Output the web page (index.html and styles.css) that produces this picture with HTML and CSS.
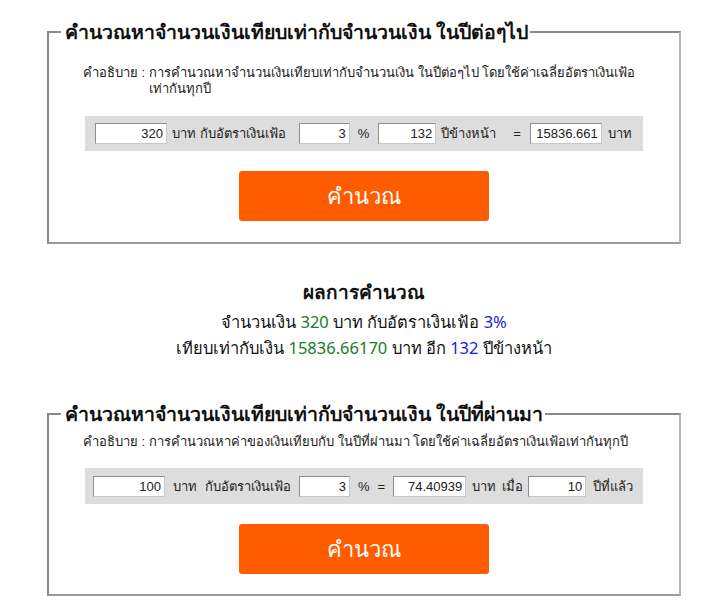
FILE: index.html
```html
<!DOCTYPE html>
<html lang="th">
<head>
<meta charset="utf-8">
<link rel="stylesheet" href="styles.css">
</head>
<body>
<div class="page">
  <fieldset class="box box-first">
    <legend class="legend">คำนวณหาจำนวนเงินเทียบเท่ากับจำนวนเงิน ในปีต่อๆไป</legend>
    <div class="desc">
      <span class="desc-label">คำอธิบาย :</span>
      <span class="desc-text">การคำนวณหาจำนวนเงินเทียบเท่ากับจำนวนเงิน ในปีต่อๆไป โดยใช้ค่าเฉลี่ยอัตราเงินเฟ้อ เท่ากันทุกปี</span>
    </div>
    <div class="bar bar1">
      <input class="in w72" type="text" value="320">
      <span class="m5">บาท กับอัตราเงินเฟ้อ</span>
      <input class="in w50 m13" type="text" value="3">
      <span class="m8">%</span>
      <input class="in w58 m9" type="text" value="132">
      <span class="m5">ปีข้างหน้า</span>
      <span class="m17">=</span>
      <input class="in w72 m9" type="text" value="15836.661">
      <span class="m6">บาท</span>
    </div>
    <div class="btn-row"><button class="btn">คำนวณ</button></div>
  </fieldset>

  <section class="result">
    <h2 class="result-title">ผลการคำนวณ</h2>
    <p class="result-line first-line">จำนวนเงิน <span class="g">320</span> บาท กับอัตราเงินเฟ้อ <span class="b">3%</span></p>
    <p class="result-line">เทียบเท่ากับเงิน <span class="g">15836.66170</span> บาท อีก <span class="b">132</span> ปีข้างหน้า</p>
  </section>

  <fieldset class="box box-second">
    <legend class="legend">คำนวณหาจำนวนเงินเทียบเท่ากับจำนวนเงิน ในปีที่ผ่านมา</legend>
    <div class="desc desc2">
      <span class="desc-label">คำอธิบาย :</span>
      <span class="desc-text">การคำนวณหาค่าของเงินเทียบกับ ในปีที่ผ่านมา โดยใช้ค่าเฉลี่ยอัตราเงินเฟ้อเท่ากันทุกปี</span>
    </div>
    <div class="bar bar2">
      <input class="in w72" type="text" value="100">
      <span class="m8">บาท</span>
      <span class="m8">กับอัตราเงินเฟ้อ</span>
      <input class="in w50 m8" type="text" value="3">
      <span class="m8">%</span>
      <span class="m8">=</span>
      <input class="in w74 m8" type="text" value="74.40939">
      <span class="m6">บาท</span>
      <span class="m6">เมื่อ</span>
      <input class="in w58 m5" type="text" value="10">
      <span class="m7">ปีที่แล้ว</span>
    </div>
    <div class="btn-row"><button class="btn">คำนวณ</button></div>
  </fieldset>
</div>
</body>
</html>
```
FILE: styles.css
```css
html, body {
  margin: 0;
  padding: 0;
  background: #ffffff;
}
body {
  font-family: "Liberation Sans", Tahoma, sans-serif;
  color: #222;
}
.page {
  width: 634px;
  margin-left: 47px;
  padding-top: 20px;
}
.box {
  margin: 0;
  border: 2px solid #999;
  border-color: #8a8a8a #b5b5b5 #9a9a9a #8a8a8a;
  padding: 0 0 21px 0;
}
.box-second {
  padding-bottom: 20px;
}
.legend {
  margin-left: 12px;
  padding: 0 2px 0 4px;
  font-family: "Noto Sans", "Liberation Sans", sans-serif;
  font-size: 19.5px;
  font-weight: 600;
  color: #111;
  line-height: 24px;
}
.desc {
  display: flex;
  margin: 21px 28px 0 34px;
  font-size: 13px;
  line-height: 16px;
  color: #222;
}
.desc2 {
  margin-top: 8px;
}
.desc-label {
  white-space: nowrap;
  margin-right: 4px;
}
.bar {
  display: flex;
  align-items: center;
  margin: 19px 36px 0 36px;
  height: 35px;
  background: #dddddd;
  font-size: 13px;
  white-space: nowrap;
}
.bar1 {
  padding-left: 10px;
}
.bar2 {
  margin-top: 18px;
  height: 36px;
  padding-left: 8px;
}
.in {
  box-sizing: border-box;
  height: 21px;
  border: 1px solid #999;
  border-color: #8f8f8f #c8c8c8 #c8c8c8 #8f8f8f;
  background: #fff;
  text-align: right;
  font-family: "Liberation Sans", Arial, sans-serif;
  font-size: 13px;
  padding: 0 3px;
  color: #222;
}
.w50 { width: 51px; }
.w58 { width: 58px; }
.w72 { width: 72px; }
.w74 { width: 73px; }
.m5 { margin-left: 5px; }
.m6 { margin-left: 6px; }
.m7 { margin-left: 7px; }
.m8 { margin-left: 8px; }
.m9 { margin-left: 9px; }
.m13 { margin-left: 13px; }
.m17 { margin-left: 17px; }
.btn-row {
  display: flex;
  justify-content: center;
  margin-top: 20px;
}
.btn {
  width: 250px;
  height: 50px;
  border: none;
  border-radius: 3px;
  background: #ff5c00;
  color: #fff;
  font-family: "Noto Sans", "Liberation Sans", sans-serif;
  font-size: 22px;
}
.result {
  text-align: center;
  padding: 33px 0 41px;
}
.result-title {
  margin: 0;
  font-family: "Noto Sans", "Liberation Sans", sans-serif;
  font-size: 19px;
  font-weight: 700;
  color: #111;
  line-height: 30px;
}
.result-line {
  margin: 0;
  font-family: "Noto Sans", "Liberation Sans", sans-serif;
  font-size: 16.5px;
  line-height: 26px;
  color: #111;
}
.first-line {
  margin-top: 2px;
}
.g { color: #1b7a2b; }
.b { color: #1a1ae6; }
```
